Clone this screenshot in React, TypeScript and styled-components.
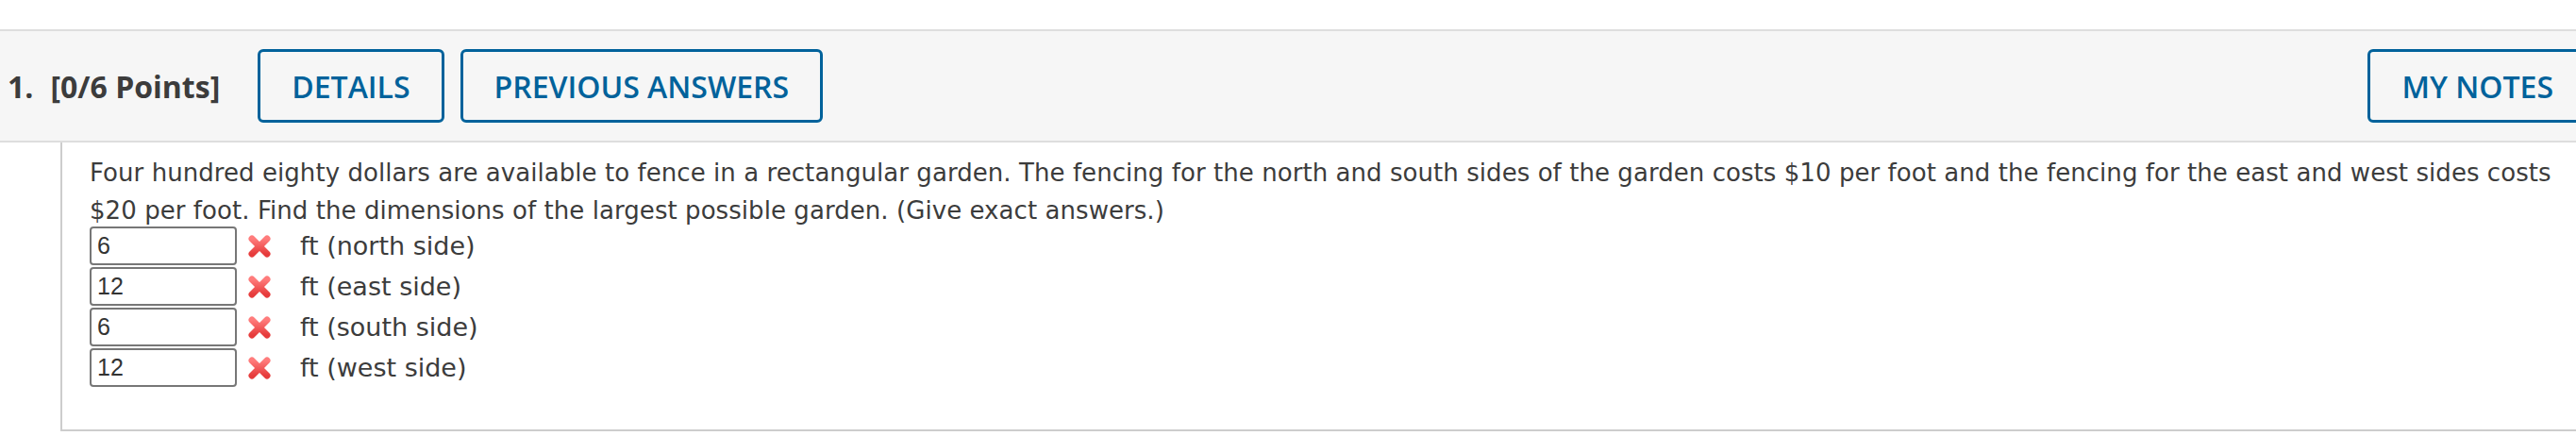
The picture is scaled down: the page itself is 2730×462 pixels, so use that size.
import React from 'react'
import styled, { createGlobalStyle } from 'styled-components'

const GlobalStyle = createGlobalStyle`
  html, body {
    margin: 0;
    padding: 0;
    background: #ffffff;
    overflow: hidden;
  }
`

const answers = [
  { value: '6', label: 'ft (north side)' },
  { value: '12', label: 'ft (east side)' },
  { value: '6', label: 'ft (south side)' },
  { value: '12', label: 'ft (west side)' },
]

const WrongIcon = () => (
  <svg width="26" height="26" viewBox="0 0 26 26">
    <defs>
      <linearGradient id="wrongGrad" x1="0" y1="0" x2="0" y2="1">
        <stop offset="0" stopColor="#ff7c7c" />
        <stop offset="1" stopColor="#e63b3b" />
      </linearGradient>
    </defs>
    <g stroke="url(#wrongGrad)" strokeWidth="7" strokeLinecap="round">
      <line x1="5" y1="5" x2="21" y2="21" />
      <line x1="21" y1="5" x2="5" y2="21" />
    </g>
  </svg>
)

const App = () => {
  return (
    <Page>
      <GlobalStyle />
      <QuestionHeader>
        <Number>1.</Number>
        <Points>[0/6 Points]</Points>
        <HeaderButton>DETAILS</HeaderButton>
        <HeaderButton>PREVIOUS ANSWERS</HeaderButton>
        <HeaderButton $pushRight>MY NOTES</HeaderButton>
      </QuestionHeader>
      <QuestionBody>
        <Prompt>
          Four hundred eighty dollars are available to fence in a rectangular garden. The fencing for the north and
          south sides of the garden costs $10 per foot and the fencing for the east and west sides costs $20 per foot.
          Find the dimensions of the largest possible garden. (Give exact answers.)
        </Prompt>
        <AnswerList>
          {answers.map((answer, index) => (
            <AnswerRow key={index}>
              <AnswerInput defaultValue={answer.value} readOnly />
              <WrongIcon />
              <AnswerLabel>{answer.label}</AnswerLabel>
            </AnswerRow>
          ))}
        </AnswerList>
      </QuestionBody>
    </Page>
  )
}

export default App

const Page = styled.div`
  width: 2742px;
  padding-top: 31px;
`

const QuestionHeader = styled.div`
  display: flex;
  align-items: center;
  height: 116px;
  padding-left: 8px;
  background: #f6f6f6;
  border-top: 2px solid #dedede;
  border-bottom: 2px solid #dedede;
  font-family: 'Open Sans', sans-serif;
`

const Number = styled.span`
  font-size: 32px;
  font-weight: 700;
  color: #3c3c3c;
  margin-right: 18px;
`

const Points = styled.span`
  font-size: 32px;
  font-weight: 700;
  color: #3c3c3c;
  margin-right: 40px;
`

const HeaderButton = styled.div<{ $pushRight?: boolean }>`
  display: flex;
  align-items: center;
  height: 78px;
  box-sizing: border-box;
  padding: 0 33px;
  margin-right: ${(p) => (p.$pushRight ? '0' : '17px')};
  margin-left: ${(p) => (p.$pushRight ? 'auto' : '0')};
  border: 3px solid #00629b;
  border-radius: 6px;
  color: #00629b;
  font-size: 32px;
  font-weight: 600;
`

const QuestionBody = styled.div`
  margin-left: 64px;
  height: 306px;
  box-sizing: border-box;
  padding: 12px 0 0 29px;
  border-left: 2px solid #cdcdcd;
  border-bottom: 2px solid #cdcdcd;
  font-family: 'DejaVu Sans', Verdana, sans-serif;
  color: #3c3c3c;
`

const Prompt = styled.div`
  font-size: 26px;
  line-height: 40px;
  letter-spacing: 0.06px;
  width: 2630px;
`

const AnswerList = styled.div`
  display: flex;
  flex-direction: column;
  gap: 2px;
  margin-top: -3px;
`

const AnswerRow = styled.div`
  display: flex;
  align-items: center;
  height: 41px;

  svg {
    margin-left: 11px;
    margin-right: 30px;
  }
`

const AnswerInput = styled.input`
  width: 156px;
  height: 41px;
  box-sizing: border-box;
  padding: 0 6px;
  border: 2px solid #777777;
  border-radius: 4px;
  font-family: 'Liberation Sans', Arial, sans-serif;
  font-size: 25px;
  color: #333333;
  background: #ffffff;
  outline: none;
`

const AnswerLabel = styled.span`
  font-size: 27px;
  color: #3c3c3c;
`
